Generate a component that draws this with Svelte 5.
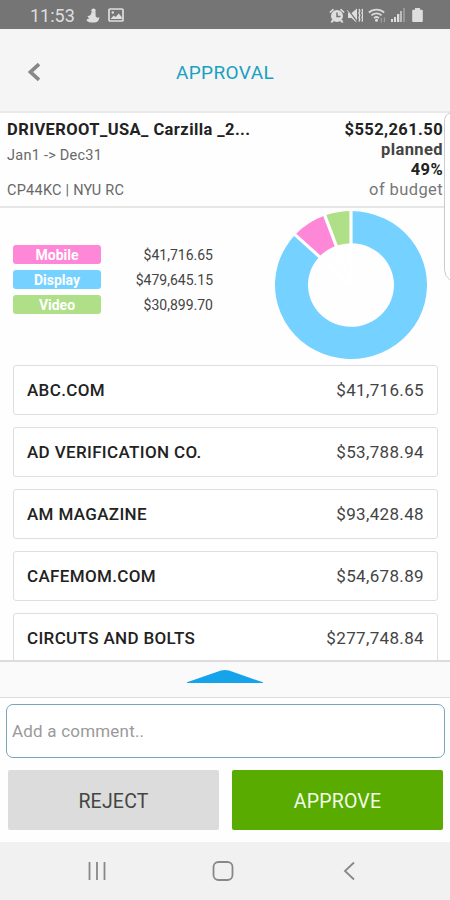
<script lang="ts">
	type Channel = { name: string; amount: number; color: string };

	const channels: Channel[] = [
		{ name: 'Mobile', amount: 41716.65, color: '#ff87d7' },
		{ name: 'Display', amount: 479645.15, color: '#75d1ff' },
		{ name: 'Video', amount: 30899.7, color: '#afdf87' }
	];

	const vendors = [
		{ name: 'ABC.COM', amount: 41716.65 },
		{ name: 'AD VERIFICATION CO.', amount: 53788.94 },
		{ name: 'AM MAGAZINE', amount: 93428.48 },
		{ name: 'CAFEMOM.COM', amount: 54678.89 },
		{ name: 'CIRCUTS AND BOLTS', amount: 277748.84 }
	];

	let comment = $state('');

	const slices = buildSlices([channels[1], channels[0], channels[2]]);

	function money(value: number) {
		return '$' + value.toFixed(2).replace(/\B(?=(\d{3})+\.)/g, ',');
	}

	function point(turn: number, radius: number) {
		const angle = turn * Math.PI * 2;
		return `${(Math.sin(angle) * radius).toFixed(2)} ${(-Math.cos(angle) * radius).toFixed(2)}`;
	}

	// Clockwise from twelve o'clock
	function buildSlices(items: Channel[]) {
		const total = items.reduce((sum, item) => sum + item.amount, 0);
		let start = 0;
		return items.map((item) => {
			const end = start + item.amount / total;
			const large = end - start > 0.5 ? 1 : 0;
			const d = `M${point(start, 76)} A76 76 0 ${large} 1 ${point(end, 76)} L${point(end, 43)} A43 43 0 ${large} 0 ${point(start, 43)} Z`;
			const gap = `M${point(start, 77)} L0 0`;
			start = end;
			return { d, gap, color: item.color };
		});
	}
</script>

<div class="screen">
	<div class="status">
		<span class="time">11:53</span>
		<svg viewBox="0 0 14 15" width="14" height="15">
			<circle cx="7.500" cy="2.600" r="2.200" />
			<path d="M5 4.500L9.500 4l.2 4.500 1.600 1.300 2.300-.6-1.300 3.500c-1.400 1.400-3.200 1.900-5.300 1.900-2.600 0-5-.6-6.500-2.200.2-1.300 1.500-1.900 3-2-.9-.4-1.700-1.200-2-2.400 1.500.3 2.700-.6 3.700-1.900z" />
		</svg>
		<svg class="photo" viewBox="0 0 16 14" width="16" height="14">
			<rect x="1" y="1" width="14" height="12" rx="1" fill="none" stroke="#dedede" stroke-width="1.700" />
			<circle cx="4.800" cy="4.500" r="1.200" />
			<path d="M2.500 11l3.200-3.500 2 1.500 3-3.500 3 3.500v2z" />
		</svg>
		<div class="indicators">
			<svg viewBox="0 0 16 15" width="16" height="15">
				<path d="M.3 4L3.900.7l1.200 1.100L1.500 5.100zM15.700 4L12.100.7l-1.200 1.100 3.600 3.300z" />
				<circle cx="8" cy="8" r="6" />
				<path d="M3 11.500l-1.500 3h2.300l1-1.500zM13 11.500l1.500 3h-2.300l-1-1.500z" />
				<path d="M8 4.500V8.500h3.500" fill="none" stroke="#757575" stroke-width="1.500" />
			</svg>
			<svg viewBox="0 0 16 15" width="16" height="15">
				<path d="M1 5h3.500L10 .5v14L4.500 10H1z" />
				<path d="M.5 1l9.500 12.500" stroke="#757575" stroke-width="1.300" />
				<path d="M.5 2.500l8 11" stroke="#dedede" stroke-width="1" />
				<path d="M12 1l.8 2-.8 2 .8 2.500-.8 2 .8 2-.8 2M15 1l.8 2-.8 2 .8 2.500-.8 2 .8 2-.8 2" fill="none" stroke="#dedede" stroke-width="1.400" />
			</svg>
			<svg class="wifi" viewBox="0 0 19 15" width="19" height="15">
				<path d="M.8 4.500a11.500 11.500 0 0 1 15.400 0M3.400 7.400a7.700 7.700 0 0 1 10.200 0M6 10.100a3.800 3.800 0 0 1 5 0" fill="none" stroke="#d8d8d8" stroke-width="1.800" />
				<circle cx="8.500" cy="12.300" r="1.500" />
				<path d="M13.300 10v4.500M16.500 9.500V14" stroke="#a0a0a0" stroke-width="1.300" />
			</svg>
			<svg class="signal" viewBox="0 0 14 14" width="14" height="14">
				<path d="M0 11h2v3H0zM3 9h2v5H3zM6 6h2.300v8H6z" />
				<path d="M9 3h2v11H9z" fill="#bcbcbc" />
				<path d="M12 0h2v14h-2z" fill="#979797" />
			</svg>
			<svg class="battery" viewBox="0 0 11 14" width="11" height="14">
				<path d="M3 0h5v1.700h1.800q1 0 1 1V13q0 1-1 1H1.200q-1 0-1-1V2.700q0-1 1-1H3z" />
			</svg>
		</div>
	</div>

	<header>
		<button class="back" aria-label="Back">
			<svg viewBox="0 0 14 20" width="14" height="20">
				<path d="M12 2.200L3.500 10l8.500 7.800" fill="none" stroke="#888" stroke-width="3.700" />
			</svg>
		</button>
		<h1>APPROVAL</h1>
	</header>

	<section class="summary">
		<div class="campaign">
			<h2>DRIVEROOT_USA_ Carzilla _2...</h2>
			<p class="dates">Jan1 -&gt; Dec31</p>
			<p class="code">CP44KC | NYU RC</p>
		</div>
		<div class="budget">
			<strong>$552,261.50</strong>
			<strong class="planned">planned</strong>
			<strong>49%</strong>
			<span class="of">of budget</span>
		</div>
	</section>

	<section class="breakdown">
		<ul class="legend">
			{#each channels as channel}
				<li>
					<span class="pill" style="background: {channel.color}">{channel.name}</span>
					<span class="amount">{money(channel.amount)}</span>
				</li>
			{/each}
		</ul>
		<svg class="donut" viewBox="-76 -76 152 152" width="152" height="148" preserveAspectRatio="none">
			{#each slices as slice}
				<path d={slice.d} fill={slice.color} />
			{/each}
			{#each slices as slice}
				<path d={slice.gap} stroke="#fff" stroke-width="3.200" />
			{/each}
		</svg>
	</section>

	<ul class="vendors">
		{#each vendors as vendor}
			<li>
				<span class="vendor">{vendor.name}</span>
				<span class="cost">{money(vendor.amount)}</span>
			</li>
		{/each}
	</ul>

	<div class="drawer">
		<svg viewBox="0 0 76 13" width="76" height="13">
			<path d="M0 13v-.7L34 .6q4-1.200 8 0l34 11.700v.7z" fill="#15a4ea" />
		</svg>
	</div>

	<div class="comment">
		<input type="text" placeholder="Add a comment.." bind:value={comment} />
	</div>

	<div class="actions">
		<button class="reject">REJECT</button>
		<button class="approve">APPROVE</button>
	</div>

	<nav>
		<svg viewBox="0 0 20 20" width="20" height="20">
			<path d="M2.500 1v18M10 1v18M17.500 1v18" />
		</svg>
		<svg viewBox="0 0 22 20" width="22" height="20">
			<rect x="1.500" y="1" width="19" height="18" rx="5" />
		</svg>
		<svg viewBox="0 0 12 20" width="12" height="20">
			<path d="M11 1.500L2 10l9 8.500" />
		</svg>
	</nav>

	<!-- Edge panel handle, floats over the page -->
	<svg class="edge" viewBox="0 0 7 170" width="7" height="170">
		<path d="M7 1Q1.500 3 1.500 9v149q0 6 5.500 10" fill="#fff" stroke="#ccc" />
	</svg>
</div>

<style>
	:global(body) {
		margin: 0;
		background: #fff;
	}

	.screen {
		position: relative;
		display: flex;
		flex-direction: column;
		width: 450px;
		height: 900px;
		overflow: hidden;
		background: #fefefe;
		font-family: Roboto, sans-serif;
		color: #222;
	}

	h1, h2, p, ul {
		margin: 0;
		padding: 0;
		font-weight: 400;
		list-style: none;
	}

	button {
		border: 0;
		padding: 0;
		font-family: inherit;
	}

	svg {
		display: block;
		flex: none;
	}

	.status {
		display: flex;
		align-items: center;
		flex: none;
		box-sizing: border-box;
		height: 29px;
		padding: 1px 27px 0 30px;
		background: #757575;
		fill: #dedede;
	}

	.time {
		width: 56px;
		font-size: 18px;
		color: #dedede;
	}

	.photo {
		margin-left: 8px;
	}

	.indicators {
		display: flex;
		align-items: center;
		margin-left: auto;
		gap: 2px;
	}

	.wifi {
		margin-left: 3px;
	}

	.signal {
		margin-left: 2px;
	}

	.battery {
		margin-left: 5px;
	}

	header {
		display: grid;
		grid-template-columns: 28px 1fr 28px;
		align-items: center;
		flex: none;
		box-sizing: border-box;
		height: 84px;
		padding: 4px 27px 0;
		border-bottom: 2px solid #e9e9e9;
		background: #f5f5f5;
	}

	.back {
		background: none;
	}

	h1 {
		text-align: center;
		font-size: 19px;
		letter-spacing: 0.4px;
		color: #1aa0c0;
	}

	.summary {
		display: flex;
		justify-content: space-between;
		flex: none;
		box-sizing: border-box;
		height: 95px;
		padding: 7px 7px 0;
		border-bottom: 2px solid #e6e6e6;
	}

	h2 {
		font-size: 16.5px;
		line-height: 20px;
		font-weight: 700;
		letter-spacing: 0.42px;
	}

	.campaign p {
		font-size: 14.5px;
		line-height: 18px;
		letter-spacing: 0.25px;
		color: #686868;
	}

	.campaign .dates {
		margin-top: 7px;
	}

	.campaign .code {
		margin-top: 17px;
	}

	.budget {
		display: flex;
		flex-direction: column;
		align-items: flex-end;
		font-size: 16.5px;
		line-height: 20px;
		letter-spacing: 0.4px;
	}

	.planned {
		color: #444;
	}

	.of {
		color: #777;
	}

	.breakdown {
		display: flex;
		justify-content: space-between;
		align-items: flex-start;
		flex: none;
		box-sizing: border-box;
		height: 157px;
		padding: 3px 23px 0 13px;
	}

	.legend {
		display: grid;
		gap: 6px;
		width: 200px;
		padding-top: 34px;
	}

	.legend li {
		display: flex;
		justify-content: space-between;
		align-items: center;
		height: 19px;
	}

	.pill {
		width: 88px;
		height: 19px;
		border-radius: 3px;
		text-align: center;
		font-size: 14px;
		line-height: 20px;
		font-weight: 700;
		color: #fff;
	}

	.amount {
		padding-top: 1px;
		font-size: 14px;
		color: #444;
	}

	.vendors {
		display: flex;
		flex-direction: column;
		gap: 12px;
		flex: none;
		box-sizing: border-box;
		height: 295px;
		padding: 0 12px 0 13px;
		overflow: hidden;
	}

	.vendors li {
		display: flex;
		justify-content: space-between;
		align-items: center;
		flex: none;
		box-sizing: border-box;
		height: 50px;
		padding: 0 13px;
		border: 1.5px solid #dedede;
		border-radius: 3px;
		background: #fff;
	}

	.vendor {
		font-size: 17px;
		font-weight: 500;
		letter-spacing: 0.35px;
	}

	.cost {
		font-size: 17px;
		letter-spacing: 0.35px;
		color: #444;
	}

	.drawer {
		display: flex;
		justify-content: center;
		flex: none;
		box-sizing: border-box;
		height: 38px;
		padding-top: 8px;
		border-top: 2px solid #dcdcdc;
		border-bottom: 1px solid #ddd;
		background: #fafafa;
	}

	.comment {
		flex: none;
		padding: 6px 5px 0 6px;
	}

	input {
		display: block;
		box-sizing: border-box;
		width: 100%;
		height: 54px;
		padding: 0 5px;
		border: 1px solid #77a5bd;
		border-radius: 7px;
		background: #fff;
		font-family: inherit;
		font-size: 17px;
		letter-spacing: 0.2px;
	}

	input::placeholder {
		color: #9a9a9a;
		opacity: 1;
	}

	.actions {
		display: grid;
		grid-template-columns: 211px 211px;
		justify-content: space-between;
		flex: none;
		height: 72px;
		padding: 12px 7px 0 8px;
		box-sizing: border-box;
		margin-bottom: 12px;
	}

	.actions button {
		height: 60px;
		padding-top: 2px;
		border-radius: 2px;
		font-size: 19.5px;
		letter-spacing: 0.2px;
	}

	.reject {
		background: #dcdcdc;
		color: #444;
	}

	.approve {
		background: #59ab00;
		color: #f2fbe8;
	}

	nav {
		display: grid;
		grid-template-columns: 125px 131px 12px;
		align-content: start;
		flex: 1;
		padding: 19px 0 0 87px;
		background: #f1f1f1;
		fill: none;
		stroke: #888;
		stroke-width: 1.8px;
	}

	.edge {
		position: absolute;
		top: 112px;
		right: 0;
	}
</style>
